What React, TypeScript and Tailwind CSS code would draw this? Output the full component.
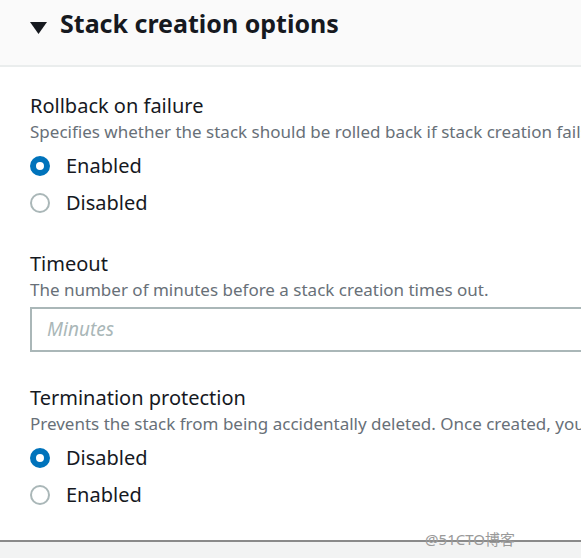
import React from "react";

function Radio({ checked, label }: { checked: boolean; label: string }) {
  return (
    <div className="flex items-center h-[37px]">
      {checked ? (
        <span className="w-[20px] h-[20px] rounded-full border-[6px] border-[#0073bb] bg-white shrink-0" />
      ) : (
        <span className="w-[20px] h-[20px] rounded-full border-2 border-[#aab7b8] bg-white shrink-0" />
      )}
      <span className="ml-[16px] text-[20px] text-[#16191f] leading-none">{label}</span>
    </div>
  );
}

function Field({ label, desc }: { label: string; desc: string }) {
  return (
    <div>
      <div className="text-[20px] leading-[26px] text-[#16191f] whitespace-nowrap">{label}</div>
      <div className="text-[17px] leading-[26px] text-[#687078] whitespace-nowrap">{desc}</div>
    </div>
  );
}

export default function App() {
  return (
    <div
      className="w-[581px] h-[558px] overflow-hidden bg-white flex flex-col"
      style={{ fontFamily: '"Noto Sans", "Noto Sans CJK SC", sans-serif' }}
    >
      <div className="h-[67px] bg-[#fafafa] border-b-2 border-[#eaeded] flex items-center pl-[30px] shrink-0">
        <svg width="17" height="14" viewBox="0 0 17 14" className="shrink-0 mb-[10px]">
          <polygon points="0,1 17,1 8.5,13" fill="#16191f" />
        </svg>
        <span className="ml-[13px] text-[25px] font-bold text-[#16191f] leading-none mb-[18px] whitespace-nowrap">
          Stack creation options
        </span>
      </div>
      <div className="flex-1 pl-[30px] pt-[26px] flex flex-col">
        <Field
          label="Rollback on failure"
          desc="Specifies whether the stack should be rolled back if stack creation fails."
        />
        <div className="mt-[2px]">
          <Radio checked label="Enabled" />
          <Radio checked={false} label="Disabled" />
        </div>
        <div className="mt-[30px]">
          <Field label="Timeout" desc="The number of minutes before a stack creation times out." />
        </div>
        <div className="mt-[4px] h-[45px] border-2 border-[#aab7b8] border-r-0 flex items-center pl-[15px]">
          <span className="text-[19px] italic text-[#aab7b8]">Minutes</span>
        </div>
        <div className="mt-[33px]">
          <Field
            label="Termination protection"
            desc="Prevents the stack from being accidentally deleted. Once created, you can update this."
          />
        </div>
        <div className="mt-[2px]">
          <Radio checked label="Disabled" />
          <Radio checked={false} label="Enabled" />
        </div>
      </div>
      <div className="h-[18px] bg-[#f2f3f3] border-t-2 border-[#8a8a8a] shrink-0 relative">
        <span className="absolute right-[66px] top-[-10px] text-[15px] text-[#9a9a9a] leading-none">@51CTO博客</span>
      </div>
    </div>
  );
}
